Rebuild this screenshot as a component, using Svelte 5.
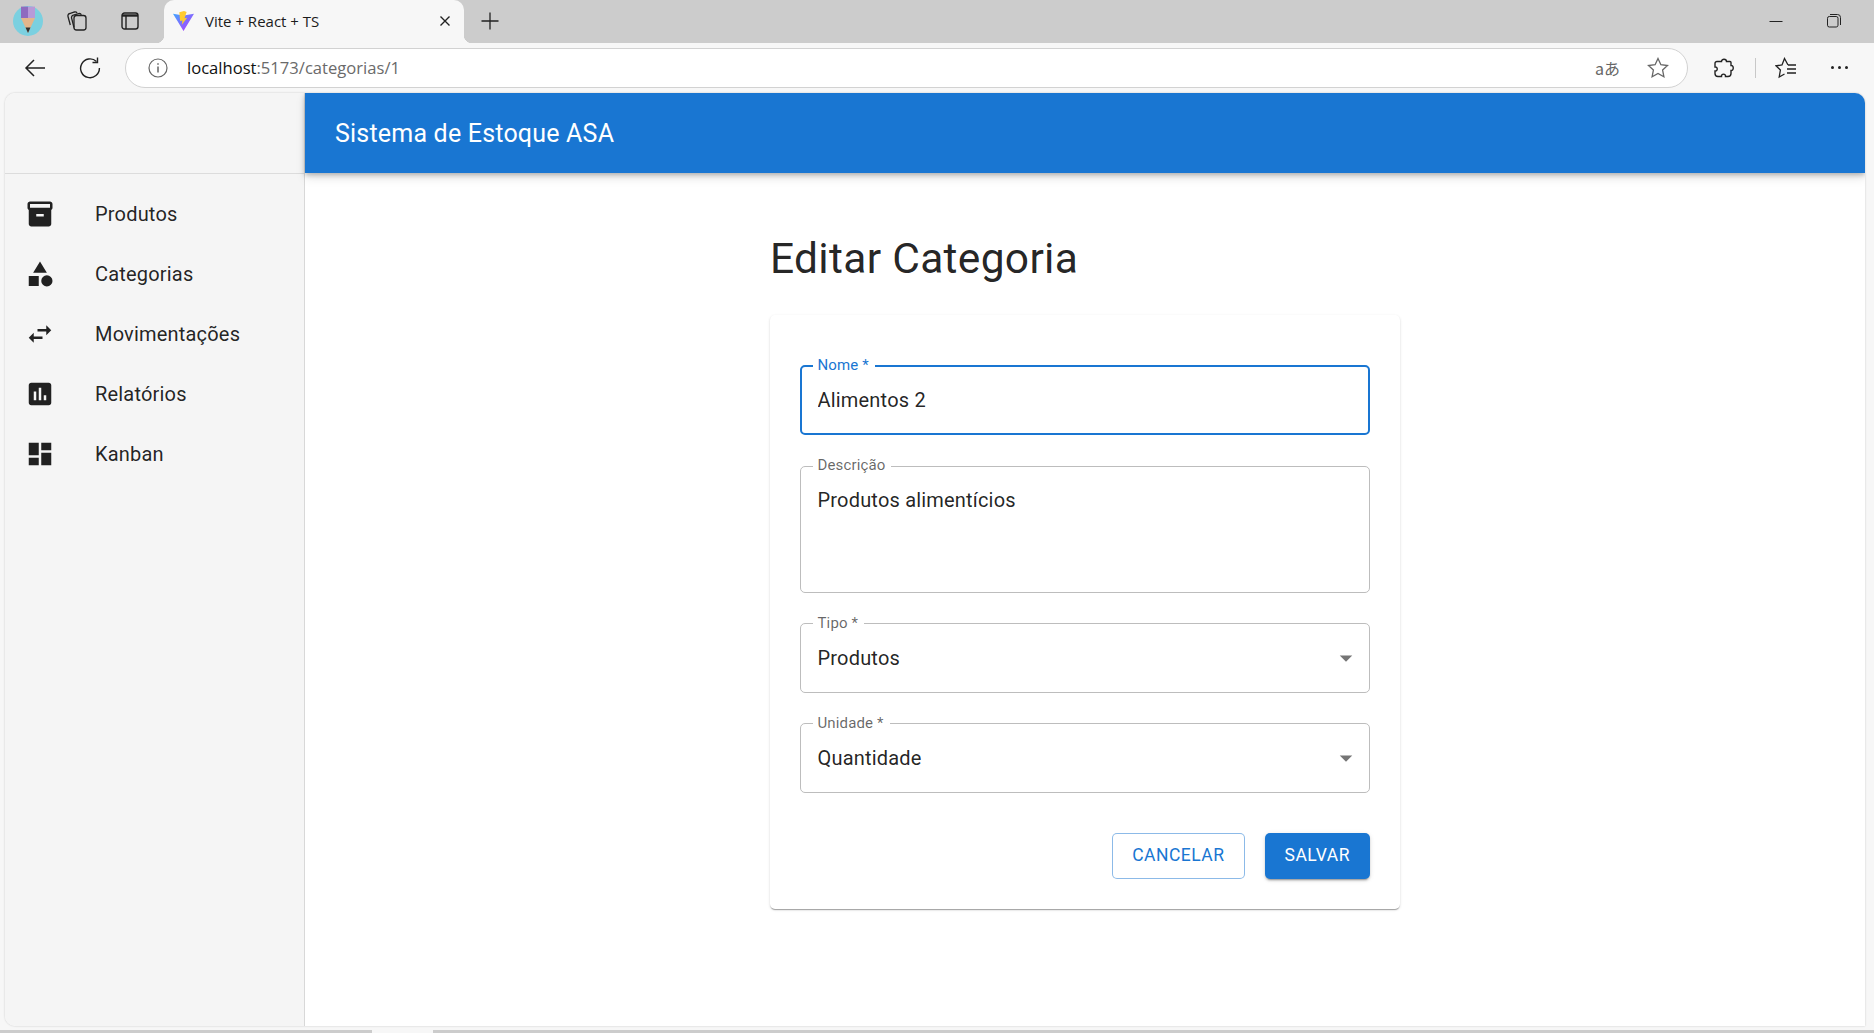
<script>
  const navItems = [
    { label: 'Produtos', d: 'M20 2H4c-1 0-2 .9-2 2v3.01c0 .72.43 1.34 1 1.69V20c0 1.1 1.1 2 2 2h14c.9 0 2-.9 2-2V8.7c.57-.35 1-.97 1-1.69V4c0-1.1-1-2-2-2zm-5 12H9v-2h6v2zm5-7H4V4l16-.02V7z' },
    { label: 'Categorias', d: 'm12 2-5.5 9h11zM17.5 13a4.5 4.5 0 1 0 0 9 4.5 4.5 0 0 0 0-9zM3 13.5h8v8H3z' },
    { label: 'Movimentações', d: 'M6.99 11 3 15l3.99 4v-3H14v-2H6.99v-3zM21 9l-3.99-4v3H10v2h7.01v3L21 9z' },
    { label: 'Relatórios', d: 'M19 3H5c-1.1 0-2 .9-2 2v14c0 1.1.9 2 2 2h14c1.1 0 2-.9 2-2V5c0-1.1-.9-2-2-2zM9 17H7v-7h2v7zm4 0h-2V7h2v10zm4 0h-2v-4h2v4z' },
    { label: 'Kanban', d: 'M3 13h8V3H3v10zm0 8h8v-6H3v6zm10 0h8V11h-8v10zm0-18v6h8V3h-8z' }
  ];
</script>

<div class="browser">
  <div class="tabstrip">
    <svg class="profile" viewBox="0 0 30 30" width="30" height="30">
      <circle cx="15" cy="15" r="15" fill="#7bd0e0" />
      <path d="M8 0.6h7V12H8z" fill="#8e6bbf" />
      <path d="M15 0.6h7V12h-7z" fill="#b79ad8" />
      <path d="M8 12h14l-7 15z" fill="#e3b68c" />
      <path d="M12.5 21.5h5L15 27z" fill="#333" />
    </svg>
    <svg class="tool-ico collections" viewBox="0 0 22 22" width="22" height="22" fill="none" stroke="#222" stroke-width="1.3">
      <rect x="8" y="5.5" width="12" height="14.5" rx="2.5" />
      <path d="M8 17.5 5.6 8.2a2.4 2.4 0 0 1 1.7-3l5.4-1.6a2.4 2.4 0 0 1 2.7 1.2" />
      <path d="M4.3 15 2 6.5a2.4 2.4 0 0 1 1.7-3L8.5 2a2.4 2.4 0 0 1 2.6 1" />
    </svg>
    <svg class="tool-ico vtabs" viewBox="0 0 18 18" width="18" height="18" fill="none" stroke="#222" stroke-width="1.4">
      <rect x="1" y="1" width="16" height="16" rx="2.5" />
      <path d="M1 3.500h16" stroke-width="2.400" />
      <path d="M5 4v13" />
    </svg>
    <div class="tab">
      <svg class="favicon" viewBox="0 0 20 20" width="21" height="21">
        <defs>
          <linearGradient id="vite" x1="0" y1="0" x2="1" y2="1">
            <stop offset="0" stop-color="#41a6ff" />
            <stop offset="1" stop-color="#bd34fe" />
          </linearGradient>
        </defs>
        <path d="M0 2.5 7 3.7 10 4.2 20 2.5 10 19z" fill="url(#vite)" />
        <path d="M10.5 0 6 1.2 6.8 9.5 9 9 8.4 13 13.5 6.5 11 7 13 1z" fill="#ffcb2e" />
      </svg>
      <span class="tab-title">Vite + React + TS</span>
      <svg class="tab-close" viewBox="0 0 12 12" width="12" height="12" stroke="#222" stroke-width="1.4">
        <path d="M1.5 1.5l9 9M10.5 1.5l-9 9" />
      </svg>
    </div>
    <svg class="new-tab" viewBox="0 0 18 18" width="18" height="18" stroke="#222" stroke-width="1.3">
      <path d="M9 0.5v17M0.5 9h17" />
    </svg>
    <div class="win-controls">
      <svg viewBox="0 0 14 14" width="14" height="14" stroke="#222" stroke-width="1"><path d="M0.5 7.5h13" /></svg>
      <svg viewBox="0 0 14 14" width="14" height="14" fill="none" stroke="#222" stroke-width="1">
        <rect x="0.5" y="2.5" width="10.5" height="10.5" rx="1.8" />
        <path d="M3 0.5h7.5a3 3 0 0 1 3 3V11" />
      </svg>
    </div>
  </div>

  <div class="toolbar">
    <svg class="nav-back" viewBox="0 0 22 22" width="22" height="22" fill="none" stroke="#222" stroke-width="1.5">
      <path d="M21 11H2M10 3l-8 8 8 8" />
    </svg>
    <svg class="nav-reload" viewBox="0 0 22 22" width="22" height="22" fill="none" stroke="#222" stroke-width="1.4">
      <path d="M17.5 4.5A9.4 9.4 0 1 0 20.4 11" />
      <path d="M18.5 0.5v5h-5" />
    </svg>
    <div class="addressbar">
      <svg viewBox="0 0 20 20" width="20" height="20" fill="none" stroke="#666" stroke-width="1.2">
        <circle cx="10" cy="10" r="9" />
        <path d="M10 8.6v6M10 5.2v1.6" stroke-width="1.5" />
      </svg>
      <span class="url"><span class="host">localhost</span>:5173/categorias/1</span>
      <span class="translate">aあ</span>
      <svg class="star" viewBox="0 0 22 22" width="22" height="22" fill="none" stroke="#666" stroke-width="1.3">
        <path d="M11 1.5l2.9 6.2 6.6.8-4.9 4.6 1.3 6.7L11 16.5l-5.9 3.3 1.3-6.7L1.500 8.500l6.600-.8z" />
      </svg>
    </div>
    <svg class="ext" viewBox="0 0 20 20" width="20" height="20" fill="none" stroke="#222" stroke-width="1.4">
      <path d="M7.500 3.500c0-3 5-3 5 0h3.500a1 1 0 0 1 1 1v3c3-.5 3 5.500 0 5v3a3 3 0 0 1-3 3h-2.500c.5-3.200-4.500-3.200-4 0H4a3 3 0 0 1-3-3v-2.500c3 .5 3-4.500 0-4V5.500a2 2 0 0 1 2-2z" />
    </svg>
    <span class="sep"></span>
    <svg class="favs" viewBox="0 0 22 22" width="22" height="22" fill="none" stroke="#222" stroke-width="1.3">
      <path d="M13 8 9.500 1.500 7 8l-6 .8 4.400 4.300L4.200 20l5.300-3" />
      <path d="M13 8h8M12 12h9M12 16h9" />
    </svg>
    <span class="more"><i></i><i></i><i></i></span>
  </div>

  <div class="viewport">
    <div class="app">
      <aside class="sidebar">
        <div class="side-head"></div>
        <nav class="side-nav">
          {#each navItems as item}
            <div class="nav-item">
              <svg class="nav-icon" viewBox="0 0 24 24" width="30" height="30"><path d={item.d} /></svg>
              <span>{item.label}</span>
            </div>
          {/each}
        </nav>
      </aside>

      <div class="content">
        <header class="appbar">Sistema de Estoque ASA</header>
        <main class="main">
          <div class="page">
            <h1 class="title">Editar Categoria</h1>
            <form class="card" on:submit|preventDefault>
              <div class="field focused">
                <label for="nome">Nome *</label>
                <input id="nome" value="Alimentos 2" />
              </div>
              <div class="field area">
                <label for="desc">Descrição</label>
                <textarea id="desc" rows="3">Produtos alimentícios</textarea>
              </div>
              <div class="field select">
                <span class="lbl">Tipo *</span>
                <span class="val">Produtos</span>
                <svg class="caret" viewBox="0 0 24 24" width="30" height="30"><path d="M7 10l5 5 5-5z" /></svg>
              </div>
              <div class="field select">
                <span class="lbl">Unidade *</span>
                <span class="val">Quantidade</span>
                <svg class="caret" viewBox="0 0 24 24" width="30" height="30"><path d="M7 10l5 5 5-5z" /></svg>
              </div>
              <div class="actions">
                <button type="button" class="btn outlined">Cancelar</button>
                <button type="submit" class="btn contained">Salvar</button>
              </div>
            </form>
          </div>
        </main>
      </div>
    </div>
  </div>

  <div class="bottom-strip"><span class="thumb"></span></div>
</div>

<style>
  :global(body) {
    margin: 0;
    overflow: hidden;
  }

  .browser {
    width: 1874px;
    height: 1033px;
    display: flex;
    flex-direction: column;
    background: #f7f7f7;
    font-family: Roboto, sans-serif;
    color: rgba(0, 0, 0, 0.87);
  }

  /* browser chrome */
  .tabstrip {
    height: 43px;
    background: #cccccc;
    display: flex;
    align-items: center;
    flex: none;
    padding-bottom: 1px;
    box-sizing: border-box;
  }

  .profile {
    margin-left: 13px;
  }

  .collections {
    margin-left: 23px;
  }

  .vtabs {
    margin-left: 33px;
  }

  .tab {
    align-self: flex-end;
    height: 43px;
    width: 300px;
    margin-left: 25px;
    margin-bottom: -1px;
    box-sizing: border-box;
    background: #f7f7f7;
    border-radius: 10px 10px 0 0;
    display: flex;
    align-items: center;
    padding: 0 13px 1px 9px;
    position: relative;
  }

  .tab::before,
  .tab::after {
    content: '';
    position: absolute;
    bottom: 0;
    width: 8px;
    height: 8px;
  }

  .tab::before {
    left: -8px;
    background: radial-gradient(circle at 0 0, #cccccc 8px, #f7f7f7 8.5px);
  }

  .tab::after {
    right: -8px;
    background: radial-gradient(circle at 100% 0, #cccccc 8px, #f7f7f7 8.5px);
  }

  .tab-title {
    margin-left: 11px;
    font-family: 'Open Sans', sans-serif;
    font-size: 15px;
    color: #1c1c1c;
    flex: 1;
  }

  .new-tab {
    margin-left: 17px;
  }

  .win-controls {
    margin-left: auto;
    margin-right: 33px;
    display: flex;
    gap: 44px;
  }

  .toolbar {
    height: 50px;
    flex: none;
    display: flex;
    align-items: center;
    padding-bottom: 1px;
    box-sizing: border-box;
  }

  .nav-back {
    margin-left: 24px;
  }

  .nav-reload {
    margin-left: 33px;
  }

  .addressbar {
    width: 1563px;
    height: 40px;
    margin-left: 24px;
    box-sizing: border-box;
    background: #fff;
    border: 1px solid #d2d2d2;
    border-radius: 20px;
    display: flex;
    align-items: center;
    padding-left: 22px;
    flex: none;
  }

  .url {
    margin-left: 19px;
    font-family: 'Open Sans', sans-serif;
    font-size: 16.600px;
    color: #6a6a6a;
    flex: 1;
  }

  .host {
    color: #111;
  }

  .translate {
    font-family: 'Noto Sans CJK JP', sans-serif;
    font-size: 16px;
    color: #666;
    margin-right: 27px;
  }

  .star {
    margin-right: 18px;
  }

  .ext {
    margin-left: 26px;
  }

  .sep {
    width: 1px;
    height: 20px;
    background: #c8c8c8;
    margin-left: 21px;
  }

  .favs {
    margin-left: 19px;
  }

  .more {
    display: flex;
    gap: 4px;
    margin-left: 34px;
  }

  .more i {
    width: 3px;
    height: 3px;
    border-radius: 50%;
    background: #222;
  }

  .viewport {
    flex: 1;
    min-height: 0;
    padding: 0 9px 0 5px;
  }

  .app {
    height: 100%;
    display: flex;
    border-radius: 10px 10px 0 10px;
    overflow: hidden;
    background: #fff;
    box-shadow: 0 0 2px rgba(0, 0, 0, 0.22);
  }

  .bottom-strip {
    height: 7px;
    flex: none;
    display: flex;
    align-items: flex-end;
  }

  .bottom-strip::before,
  .bottom-strip::after {
    content: '';
    height: 3px;
    background: #cccccc;
  }

  .bottom-strip::before {
    width: 372px;
  }

  .bottom-strip::after {
    flex: 1;
  }

  .thumb {
    width: 61px;
  }

  /* sidebar */
  .sidebar {
    width: 300px;
    flex: none;
    background: #f5f5f5;
    border-right: 1px solid #d8d8d8;
    box-sizing: border-box;
  }

  .side-head {
    height: 80px;
    border-bottom: 1px solid #dcdcdc;
  }

  .side-nav {
    padding-top: 10px;
  }

  .nav-item {
    height: 60px;
    display: flex;
    align-items: center;
    padding-left: 20px;
    font-size: 20px;
    letter-spacing: 0.19px;
  }

  .nav-icon {
    fill: #212121;
    margin-right: 40px;
  }

  /* content */
  .content {
    flex: 1;
    min-width: 0;
    display: flex;
    flex-direction: column;
  }

  .appbar {
    height: 80px;
    flex: none;
    box-sizing: border-box;
    display: flex;
    align-items: center;
    padding: 0 30px;
    background: #1976d2;
    color: #fff;
    font-size: 25px;
    font-weight: 450;
    letter-spacing: 0.2px;
    box-shadow: 0 2px 5px rgba(0, 0, 0, 0.25), 0 5px 10px rgba(0, 0, 0, 0.1);
  }

  .main {
    flex: 1;
    display: flex;
    justify-content: center;
  }

  .page {
    width: 630px;
    padding-top: 57px;
  }

  .title {
    margin: 0 0 28px;
    font-size: 42.500px;
    font-weight: 400;
    line-height: 57px;
    letter-spacing: 0.31px;
  }

  .card {
    box-sizing: border-box;
    padding: 50px 30px 30px;
    background: #fff;
    border-radius: 5px;
    box-shadow: 0 2px 1px -1px rgba(0, 0, 0, 0.2), 0 1px 1px 0 rgba(0, 0, 0, 0.14), 0 1px 3px 0 rgba(0, 0, 0, 0.12);
    display: flex;
    flex-direction: column;
    gap: 30px;
  }

  .field {
    position: relative;
    height: 70px;
    box-sizing: border-box;
    border: 1px solid #bdbdbd;
    border-radius: 5px;
    display: flex;
    align-items: center;
    padding: 0 16.500px;
  }

  .field.focused {
    border: 2.500px solid #1976d2;
    padding: 0 15.500px;
    margin-bottom: 1px;
  }

  .field.area {
    height: 127px;
    align-items: flex-start;
    padding-top: 19px;
  }

  .field label,
  .lbl {
    position: absolute;
    top: -10px;
    left: 11.500px;
    padding: 0 6px 0 5px;
    background: #fff;
    font-size: 15px;
    line-height: 18px;
    letter-spacing: 0.14px;
    color: rgba(0, 0, 0, 0.6);
  }

  .field.area label {
    top: -11px;
  }

  .field.focused label {
    top: -11px;
    left: 10.500px;
    color: #1976d2;
  }

  input,
  textarea,
  .val {
    font-family: Roboto, sans-serif;
    font-size: 20px;
    line-height: 29px;
    letter-spacing: 0.19px;
    color: rgba(0, 0, 0, 0.87);
  }

  input,
  textarea {
    width: 100%;
    padding: 0;
    border: none;
    outline: none;
    background: transparent;
    resize: none;
  }

  .caret {
    position: absolute;
    right: 8px;
    top: 19px;
    fill: #757575;
  }

  .actions {
    display: flex;
    justify-content: flex-end;
    gap: 20px;
    margin-top: 10px;
  }

  .btn {
    height: 46px;
    box-sizing: border-box;
    border-radius: 5px;
    font-family: Roboto, sans-serif;
    font-size: 17.500px;
    font-weight: 450;
    letter-spacing: 0.5px;
    text-transform: uppercase;
    padding: 0 19px 2px;
    cursor: pointer;
  }

  .outlined {
    background: #fff;
    color: #1976d2;
    border: 1px solid rgba(25, 118, 210, 0.5);
  }

  .contained {
    padding: 0 20px 2px;
    background: #1976d2;
    color: #fff;
    border: none;
    box-shadow: 0 3px 1px -2px rgba(0, 0, 0, 0.2), 0 2px 2px 0 rgba(0, 0, 0, 0.14), 0 1px 5px 0 rgba(0, 0, 0, 0.12);
  }
</style>
